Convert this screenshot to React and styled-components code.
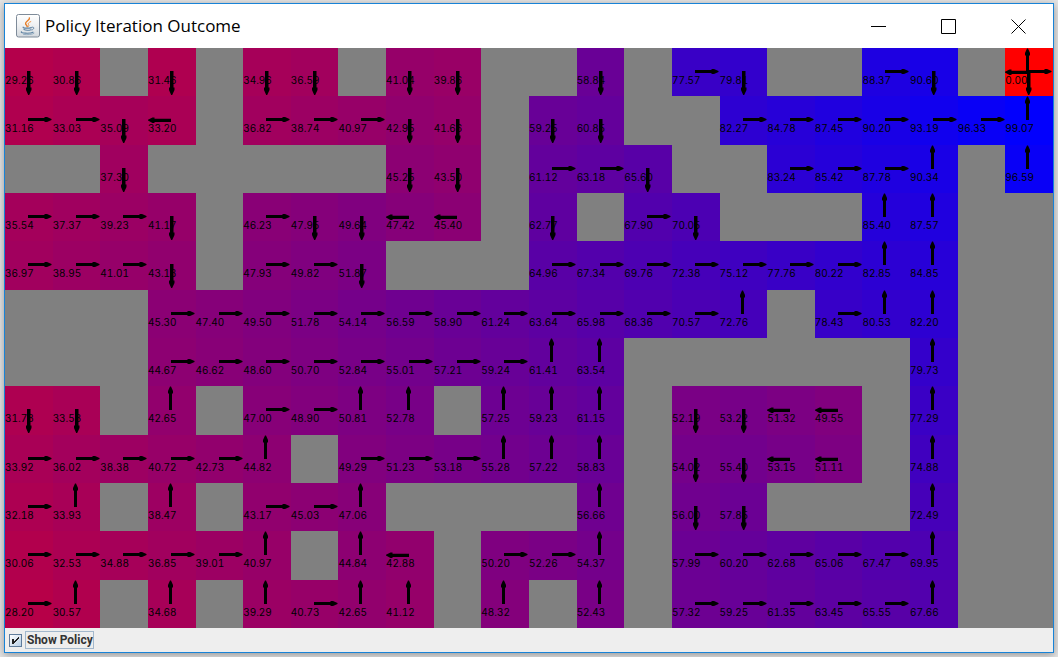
import React, { useState } from "react";
import styled, { createGlobalStyle } from "styled-components";

const GlobalStyle = createGlobalStyle`
  * { box-sizing: border-box; }
  body {
    margin: 0;
    background: #e4e4e4;
    font-family: "Liberation Sans", Arial, sans-serif;
  }
`;

const Desktop = styled.div`
  display: flex;
  min-height: 100vh;
  padding: 3px 4px 4px;
`;

const Window = styled.main`
  flex: 1;
  min-width: 0;
  display: flex;
  flex-direction: column;
  border: 1px solid #1883d7;
  background: #eeeeee;
  box-shadow: 0 2px 8px rgba(0, 0, 0, 0.35);
`;

const TitleBar = styled.header`
  display: flex;
  align-items: center;
  height: 44px;
  padding-left: 11px;
  background: #ffffff;
`;

const AppIcon = styled.svg`
  width: 24px;
  height: 24px;
  margin-right: 5px;
`;

const Title = styled.h1`
  flex: 1;
  margin: 0;
  font: 400 17px/24px "Open Sans", "Noto Sans", sans-serif;
  color: #000000;
  white-space: nowrap;
`;

const WindowButton = styled.button`
  display: flex;
  align-items: center;
  justify-content: center;
  width: 70px;
  height: 44px;
  padding: 0;
  border: 0;
  background: transparent;
`;

const World = styled.table`
  flex: 1;
  display: grid;
  grid-template-columns: repeat(22, minmax(0, 1fr));
  grid-template-rows: repeat(12, minmax(48px, 1fr));
  background: #808080;
`;

const Rows = styled.tbody`
  display: contents;
`;

const Row = styled.tr`
  display: contents;
`;

const Cell = styled.td`
  display: grid;
  align-content: start;
  padding: 0;
`;

const Value = styled.span`
  grid-area: 1 / 1;
  padding-top: 26px;
  font: 400 10px/13px Inter, "Liberation Sans", sans-serif;
  font-variant-numeric: tabular-nums;
  color: #000000;
`;

const ArrowBox = styled.svg`
  grid-area: 1 / 1;
  position: relative;
  width: 48px;
  height: 48px;
`;

const Footer = styled.footer`
  display: flex;
  align-items: center;
  height: 24px;
  padding-left: 4px;
  gap: 3px;
`;

const CheckHolder = styled.span`
  display: grid;
`;

const CheckInput = styled.input`
  grid-area: 1 / 1;
  appearance: none;
  width: 13px;
  height: 13px;
  margin: 0;
  border: 1px solid #5f7c9b;
  background: linear-gradient(135deg, #ffffff, #b8cfe5);
`;

const CheckMark = styled.svg`
  grid-area: 1 / 1;
  width: 13px;
  height: 13px;
  pointer-events: none;
`;

const CheckLabel = styled.label`
  height: 18px;
  padding: 0 0 0 1px;
  border: 1px solid #a3b8cc;
  font-family: Roboto, "Liberation Sans", sans-serif;
  font-size: 12px;
  line-height: 16px;
  font-weight: 700;
  color: #333333;
`;

/* One row per line; "." is a wall, otherwise value + policy direction. */
const MAZE = `
29.26d 30.86d . 31.46d . 34.96d 36.59d . 41.04d 39.86d . . 58.84d . 77.57r 79.81d . . 88.37r 90.60d . 0.00udlr
31.16r 33.03r 35.09d 33.20l . 36.82r 38.74r 40.97r 42.95d 41.66d . 59.25d 60.85d . . 82.27r 84.78r 87.45r 90.20r 93.19r 96.33r 99.07u
. . 37.30d . . . . . 45.25d 43.50d . 61.12r 63.18r 65.60d . . 83.24r 85.42r 87.78r 90.34u . 96.59u
35.54r 37.37r 39.23r 41.17d . 46.23r 47.95d 49.64d 47.42l 45.40l . 62.77d . 67.90r 70.05d . . . 85.40u 87.57u . .
36.97r 38.95r 41.01r 43.13d . 47.93r 49.82r 51.87d . . . 64.96r 67.34r 69.76r 72.38r 75.12r 77.76r 80.22r 82.85u 84.85u . .
. . . 45.30r 47.40r 49.50r 51.78r 54.14r 56.59r 58.90r 61.24r 63.64r 65.98r 68.36r 70.57r 72.76u . 78.43r 80.53u 82.20u . .
. . . 44.67r 46.62r 48.60r 50.70r 52.84r 55.01r 57.21r 59.24r 61.41u 63.54u . . . . . . 79.73u . .
31.78d 33.58d . 42.65u . 47.00r 48.90r 50.81u 52.78u . 57.25u 59.23u 61.15u . 52.19d 53.22d 51.32l 49.55l . 77.29u . .
33.92r 36.02r 38.38r 40.72r 42.73r 44.82u . 49.29r 51.23r 53.18r 55.28u 57.22u 58.83u . 54.02d 55.40d 53.15l 51.11l . 74.88u . .
32.18r 33.93u . 38.47u . 43.17r 45.03r 47.06u . . . . 56.66u . 56.00d 57.85d . . . 72.49u . .
30.06r 32.53r 34.88r 36.85r 39.01r 40.97u . 44.84u 42.88l . 50.20r 52.26r 54.37u . 57.99r 60.20r 62.68r 65.06r 67.47r 69.95u . .
28.20r 30.57u . 34.68u . 39.29u 40.73r 42.65u 41.12u . 48.32u . 52.43u . 57.32r 59.25r 61.35r 63.45r 65.55r 67.66u . .
`
  .trim()
  .split("\n")
  .map((line) =>
    line.split(" ").map((token) => {
      const match = token.match(/^([\d.]+)([udlr]+)$/);
      return match ? { value: match[1], moves: match[2].split("") } : null;
    })
  );

const ARROWS = {
  r: "M23 22H39.5V21H42L46.5 23V24L42 26H39.5V25H23Z",
  l: "M23 22.7H6.5V21.5H4.5L0 23.8V24.6L4.5 27H6.5V25.9H23Z",
  d: "M22 23V39.5H21V42L23.2 47H24.2L26.5 42V39.5H25.5V23Z",
  u: "M21 24V7.5H20V5L22 0.5H23L25 5V7.5H24V24Z",
};

const cellColor = (value) => {
  const blue = Math.round(Number(value) * 2.55);
  return `rgb(${255 - blue}, 0, ${blue})`;
};

function WorldCell({ cell, showPolicy }) {
  if (!cell) return <Cell />;
  return (
    <Cell style={{ backgroundColor: cellColor(cell.value) }}>
      <Value>{cell.value}</Value>
      {showPolicy && (
        <ArrowBox viewBox="0 0 48 48" aria-hidden="true">
          {cell.moves.map((move) => (
            <path key={move} d={ARROWS[move]} />
          ))}
        </ArrowBox>
      )}
    </Cell>
  );
}

function JavaIcon() {
  return (
    <AppIcon viewBox="0 0 24 24" aria-hidden="true">
      <defs>
        <linearGradient id="tile" x1="0" y1="0" x2="0" y2="1">
          <stop offset="0" stopColor="#ffffff" />
          <stop offset="0.5" stopColor="#eef0f2" />
          <stop offset="1" stopColor="#d3d8dd" />
        </linearGradient>
      </defs>
      <rect x="0.5" y="0.5" width="23" height="22.5" rx="2" fill="url(#tile)" stroke="#7e8b99" />
      <g fill="none" strokeLinecap="round">
        <path d="M13.4 4C14.2 6.2 9 7.4 9.6 9.8C9.9 10.9 11.3 11.6 11.2 12.8" stroke="#e57a22" strokeWidth="1.4" />
        <path d="M14.8 7.6C12.4 8.6 11.7 9.4 12.6 10.6C13.2 11.5 12.7 12.2 12.2 12.8" stroke="#ee9448" strokeWidth="1" />
        <path d="M7.2 13.2C6.4 14.3 12.8 14.5 15.3 13.6" stroke="#5f83a3" strokeWidth="1.2" />
        <path d="M8 15.6C9.4 16.5 13.2 16.4 15 15.7" stroke="#5f83a3" strokeWidth="1.2" />
        <path d="M16 13.2C18.6 12.6 18.4 15.1 16 16" stroke="#5f83a3" strokeWidth="1" />
        <path d="M5.5 17.8C3.8 19.4 14.4 19.8 17 18.2" stroke="#5f83a3" strokeWidth="1.2" />
        <path d="M7.5 20.4C11 21 16.4 20.6 18 19.3" stroke="#84a0b8" strokeWidth="0.8" />
      </g>
    </AppIcon>
  );
}

const CONTROLS = [
  { name: "Minimize", path: "M0 7.5H15" },
  { name: "Maximize", path: "M0.5 0.5H14.5V14.5H0.5Z" },
  { name: "Close", path: "M0.5 0.5L14.5 14.5M14.5 0.5L0.5 14.5" },
];

export default function App() {
  const [showPolicy, setShowPolicy] = useState(true);
  return (
    <>
      <GlobalStyle />
      <Desktop>
        <Window>
          <TitleBar>
            <JavaIcon />
            <Title>Policy Iteration Outcome</Title>
            {CONTROLS.map(({ name, path }) => (
              <WindowButton key={name} type="button" aria-label={name}>
                <svg width="15" height="15" viewBox="0 0 15 15" fill="none" stroke="#000000">
                  <path d={path} />
                </svg>
              </WindowButton>
            ))}
          </TitleBar>
          <World>
            <Rows>
              {MAZE.map((row, y) => (
                <Row key={y}>
                  {row.map((cell, x) => (
                    <WorldCell key={x} cell={cell} showPolicy={showPolicy} />
                  ))}
                </Row>
              ))}
            </Rows>
          </World>
          <Footer>
            <CheckHolder>
              <CheckInput
                id="show-policy"
                type="checkbox"
                checked={showPolicy}
                onChange={(event) => setShowPolicy(event.target.checked)}
              />
              {showPolicy && (
                <CheckMark viewBox="0 0 13 13" aria-hidden="true">
                  <path d="M3 5H5V7H6V6H7V5H8V4H9V3H10V5H9V6H8V7H7V8H6V9H5V10H3Z" fill="#222222" />
                </CheckMark>
              )}
            </CheckHolder>
            <CheckLabel htmlFor="show-policy">Show Policy</CheckLabel>
          </Footer>
        </Window>
      </Desktop>
    </>
  );
}
